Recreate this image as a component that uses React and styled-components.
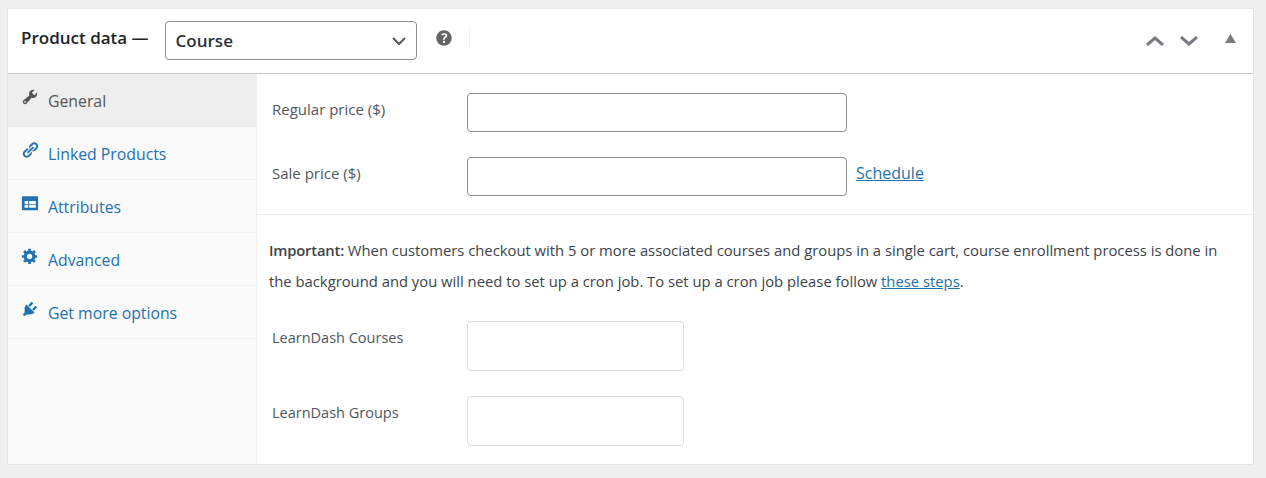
import React from 'react';
import styled, { createGlobalStyle } from 'styled-components';

const GlobalStyle = createGlobalStyle`
	html, body {
		margin: 0;
		height: 100%;
		background: #f0f0f0;
		font-family: "Open Sans", "Noto Sans", sans-serif;
	}
`;

const Page = styled.div`
	padding: 8px 12px 0 7px;
`;

const Panel = styled.div`
	height: 457px;
	box-sizing: border-box;
	background: #fff;
	border: 1px solid #e5e5e5;
	display: flex;
	flex-direction: column;
	overflow: hidden;
`;

const Header = styled.div`
	height: 65px;
	flex-shrink: 0;
	box-sizing: border-box;
	border-bottom: 1px solid #c3c4c7;
	display: flex;
	align-items: flex-start;
	padding: 12px 17px 0 13px;
`;

const Heading = styled.h2`
	margin: 5px 16px 0 0;
	font-size: 17px;
	line-height: 24px;
	font-weight: 600;
	color: #1d2327;
`;

const TypeSelect = styled.div`
	width: 252px;
	height: 39px;
	box-sizing: border-box;
	border: 1px solid #8c8f94;
	border-radius: 4px;
	padding: 0 10px;
	display: flex;
	align-items: center;
	justify-content: space-between;
	font-size: 17px;
	font-weight: 600;
	color: #2c3338;
`;

const HelpIcon = styled.svg`
	width: 22px;
	height: 22px;
	margin: 6px 0 0 16px;
	fill: #646464;
`;

const Divider = styled.div`
	width: 1px;
	height: 20px;
	margin: 8px 0 0 14px;
	background: #f0f0f1;
`;

const HeaderActions = styled.div`
	margin-left: auto;
	display: flex;
	align-items: center;
	height: 39px;
`;

const Chevron = styled.svg`
	width: 18px;
	height: 10px;
	margin-right: 16px;
	fill: none;
	stroke: #787c82;
	stroke-width: 3;
`;

const Collapse = styled.svg`
	width: 11px;
	height: 9px;
	margin: 0 0 4px 11px;
	fill: #787c82;
`;

const Body = styled.div`
	flex: 1;
	display: flex;
	min-height: 0;
`;

const Sidebar = styled.ul`
	width: 249px;
	flex-shrink: 0;
	box-sizing: border-box;
	margin: 0;
	padding: 0;
	list-style: none;
	background: #fafafa;
	border-right: 1px solid #eee;
`;

const TabItem = styled.li`
	height: 53px;
	box-sizing: border-box;
	display: flex;
	align-items: center;
	gap: 9px;
	padding: 2px 0 0 13px;
	font-size: 15.8px;
	color: ${props => (props.$active ? '#555' : '#2271b1')};
	background: ${props => (props.$active ? '#eee' : 'transparent')};
	border-bottom: 1px solid ${props => (props.$active ? '#eee' : '#f0f0f0')};
`;

const TabIcon = styled.svg`
	width: 18px;
	height: 18px;
	margin-top: -8px;
	fill: ${props => (props.$active ? '#555' : '#2271b1')};
`;

const Content = styled.div`
	flex: 1;
	min-width: 0;
`;

const PriceGroup = styled.div`
	height: 141px;
	box-sizing: border-box;
	padding-top: 19px;
	border-bottom: 1px solid #eee;
	display: flex;
	flex-direction: column;
	gap: 25px;
`;

const Field = styled.div`
	display: flex;
	align-items: flex-start;
	padding-left: 15px;
`;

const FieldLabel = styled.label`
	width: 195px;
	flex-shrink: 0;
	font-size: ${props => props.$size || 15}px;
	line-height: 24px;
	padding-top: ${props => props.$top || 4}px;
	color: #50575e;
`;

const PriceInput = styled.div`
	width: 380px;
	height: 39px;
	box-sizing: border-box;
	background: #fff;
	border: 1px solid #8c8f94;
	border-radius: 4px;
`;

const TextLink = styled.a`
	color: #2271b1;
	text-decoration: underline;
`;

const ScheduleLink = styled(TextLink)`
	margin: 3px 0 0 9px;
	font-size: 16px;
	line-height: 26px;
`;

const Notice = styled.p`
	margin: 20px 30px 0 12px;
	font-size: 14.8px;
	line-height: 31px;
	color: #3c434a;

	strong {
		font-weight: 600;
		letter-spacing: -0.2px;
	}
`;

const CourseGroup = styled.div`
	margin-top: 24px;
	display: flex;
	flex-direction: column;
	gap: 25px;
`;

const CourseInput = styled.div`
	width: 217px;
	height: 50px;
	box-sizing: border-box;
	background: #fff;
	border: 1px solid #ddd;
	border-radius: 4px;
`;

const tabs = [
	{
		label: 'General',
		active: true,
		d: 'M16.68 9.77c-1.34 1.34-3.3 1.67-4.95.99l-5.41 6.52c-.99.99-2.59.99-3.58 0s-.99-2.59 0-3.57l6.52-5.42c-.68-1.65-.35-3.61.99-4.95 1.28-1.28 3.12-1.62 4.72-1.06l-2.89 2.89 2.82 2.82 2.86-2.87c.53 1.58.18 3.39-1.08 4.67zM3.81 16.21c.4.39 1.04.39 1.43 0 .4-.4.4-1.04 0-1.43-.39-.4-1.03-.4-1.43 0-.39.39-.39 1.03 0 1.43z',
	},
	{
		label: 'Linked Products',
		d: 'M17.74 2.76c1.68 1.69 1.68 4.41 0 6.1l-1.53 1.52c-1.12 1.12-2.7 1.47-4.14 1.09l2.62-2.61.76-.77.76-.76c.84-.84.84-2.2 0-3.04-.84-.85-2.2-.85-3.04 0l-.77.76-3.38 3.38c-.37-1.44-.02-3.02 1.1-4.14l1.52-1.53c1.69-1.68 4.42-1.68 6.1 0zM8.59 13.43l5.34-5.34c.42-.42.42-1.1 0-1.52-.44-.43-1.13-.39-1.53 0l-5.33 5.34c-.42.42-.42 1.1 0 1.52.44.43 1.13.39 1.52 0zm-.76 2.29l4.14-4.15c.38 1.44.03 3.02-1.09 4.14l-1.52 1.53c-1.69 1.68-4.41 1.68-6.1 0-1.68-1.68-1.68-4.42 0-6.1l1.53-1.52c1.12-1.12 2.7-1.47 4.14-1.1l-4.14 4.15c-.85.84-.85 2.2 0 3.05.84.84 2.2.84 3.04 0z',
	},
	{
		label: 'Attributes',
		d: 'M2 2.5h16a1 1 0 0 1 1 1V17a1 1 0 0 1-1 1H2a1 1 0 0 1-1-1V3.5a1 1 0 0 1 1-1zM4 7.800v3.200h4V7.800H4zm5 0v3.200h7.500V7.800H9zM4 11.900v3.300h4v-3.300H4zm5 0v3.300h7.500v-3.300H9z',
	},
	{
		label: 'Advanced',
		d: 'M18 12h-2.18c-.17.7-.44 1.35-.81 1.93l1.54 1.54-2.1 2.1-1.54-1.54c-.58.36-1.23.63-1.91.79V19H8v-2.18c-.68-.16-1.33-.43-1.91-.79l-1.54 1.54-2.12-2.12 1.54-1.54c-.36-.58-.63-1.23-.79-1.91H1V9.03h2.17c.16-.7.44-1.35.8-1.94L2.43 5.55l2.1-2.1 1.54 1.54c.58-.37 1.24-.64 1.93-.81V2h3v2.18c.68.16 1.33.43 1.91.79l1.54-1.54 2.12 2.12-1.54 1.54c.36.59.64 1.24.8 1.94H18V12zm-8.5 1.5c1.66 0 3-1.34 3-3s-1.34-3-3-3-3 1.34-3 3 1.34 3 3 3z',
	},
	{
		label: 'Get more options',
		d: 'M13.11 4.36L9.87 7.6 8 5.73l3.24-3.24c.35-.34 1.05-.2 1.56.32.52.51.66 1.21.31 1.55zm-8 1.77l.91-1.12 9.01 9.01-1.19.84c-.71.71-2.63 1.16-3.82 1.16H6.14L4.9 17.26c-.59.59-1.54.59-2.12 0-.59-.58-.59-1.53 0-2.12l1.24-1.24v-3.88c0-1.13.4-3.19 1.09-3.89zm7.26 3.97l3.24-3.24c.34-.35 1.04-.21 1.55.31.52.51.66 1.21.31 1.55l-3.24 3.25z',
	},
];

const App = () => (
	<Page>
		<GlobalStyle />
		<Panel>
			<Header>
				<Heading>Product data —</Heading>
				<TypeSelect>
					Course
					<svg width="14" height="8" viewBox="0 0 14 8" fill="none" stroke="#50575e" strokeWidth="2">
						<path d="M1 1l6 6 6-6" />
					</svg>
				</TypeSelect>
				<HelpIcon viewBox="0 0 20 20">
					<path d="M17 10c0-3.87-3.14-7-7-7-3.87 0-7 3.13-7 7 0 3.86 3.13 7 7 7 3.86 0 7-3.14 7-7zm-6.3 1.48H9.14v-.43c0-.38.08-.7.24-.98s.46-.57.88-.89c.41-.29.68-.53.81-.71.14-.18.2-.39.2-.62 0-.25-.09-.44-.28-.58-.19-.13-.45-.19-.79-.19-.58 0-1.25.19-2 .57l-.64-1.28c.87-.49 1.8-.74 2.77-.74.81 0 1.45.2 1.92.58.48.39.71.91.71 1.55 0 .43-.09.8-.29 1.11-.19.32-.57.67-1.11 1.06-.38.28-.61.49-.71.63-.1.15-.15.34-.15.57v.35zm-1.47 2.74c-.18-.17-.27-.42-.27-.73 0-.33.08-.58.26-.75s.43-.25.77-.25c.32 0 .57.09.75.26s.27.42.27.74c0 .3-.09.55-.27.72-.18.18-.43.27-.75.27-.33 0-.58-.09-.76-.26z" />
				</HelpIcon>
				<Divider />
				<HeaderActions>
					<Chevron viewBox="0 0 18 10">
						<path d="M1 9l8-7 8 7" />
					</Chevron>
					<Chevron viewBox="0 0 18 10">
						<path d="M1 1l8 7 8-7" />
					</Chevron>
					<Collapse viewBox="0 0 11 9">
						<path d="M5.5 0L11 9H0z" />
					</Collapse>
				</HeaderActions>
			</Header>
			<Body>
				<Sidebar>
					{tabs.map(tab => (
						<TabItem key={tab.label} $active={tab.active}>
							<TabIcon viewBox="0 0 20 20" $active={tab.active}>
								<path d={tab.d} fillRule="evenodd" />
							</TabIcon>
							{tab.label}
						</TabItem>
					))}
				</Sidebar>
				<Content>
					<PriceGroup>
						<Field>
							<FieldLabel>Regular price ($)</FieldLabel>
							<PriceInput />
						</Field>
						<Field>
							<FieldLabel>Sale price ($)</FieldLabel>
							<PriceInput />
							<ScheduleLink href="#">Schedule</ScheduleLink>
						</Field>
					</PriceGroup>
					<Notice>
						<strong>Important:</strong> When customers checkout with 5 or more associated courses and groups in a single cart, course enrollment process is done in the background and you will need to set up a cron job. To set up a cron job please follow <TextLink href="#">these steps</TextLink>.
					</Notice>
					<CourseGroup>
						<Field>
							<FieldLabel $size={14.5} $top={5}>LearnDash Courses</FieldLabel>
							<CourseInput />
						</Field>
						<Field>
							<FieldLabel $size={14.5} $top={5}>LearnDash Groups</FieldLabel>
							<CourseInput />
						</Field>
					</CourseGroup>
				</Content>
			</Body>
		</Panel>
	</Page>
);

export default App;
